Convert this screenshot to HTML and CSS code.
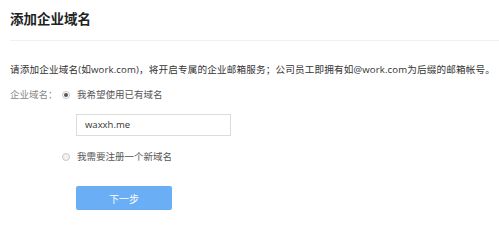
FILE: index.html
```html
<!DOCTYPE html>
<html lang="zh-CN">
<head>
<meta charset="utf-8">
<title>添加企业域名</title>
<link rel="stylesheet" href="styles.css">
</head>
<body>
<div class="page">
  <div class="header">
    <h1 class="title">添加企业域名</h1>
  </div>
  <p class="desc">请添加企业域名(如work.com)，将开启专属的企业邮箱服务；公司员工即拥有如@work.com为后缀的邮箱帐号。</p>
  <div class="form">
    <div class="label">企业域名：</div>
    <div class="field">
      <label class="option"><span class="radio checked"></span><span>我希望使用已有域名</span></label>
      <div class="input">waxxh.me</div>
      <label class="option option-2"><span class="radio"></span><span>我需要注册一个新域名</span></label>
      <button class="btn">下一步</button>
    </div>
  </div>
</div>
</body>
</html>
```
FILE: styles.css
```css
html, body {
  margin: 0;
  padding: 0;
  background: #fff;
}
body {
  font-family: "Open Sans", "Noto Sans CJK SC", sans-serif;
  color: #333;
}
.page {
  padding: 10px 0 0 10px;
}
.header {
  height: 30px;
  border-bottom: 1px solid #f0f0f0;
}
.title {
  margin: 0;
  font-size: 13.5px;
  line-height: 18px;
  font-weight: bold;
  color: #222;
}
.desc {
  margin: 22px 0 0 0;
  font-size: 9.6px;
  line-height: 14px;
  letter-spacing: 0.15px;
  color: #333;
  white-space: nowrap;
}
.form {
  margin-top: 11px;
  display: grid;
  grid-template-columns: 52px 1fr;
  font-size: 9.5px;
  line-height: 14px;
}
.label {
  color: #888;
}
.field {
  display: flex;
  flex-direction: column;
  align-items: flex-start;
}
.option {
  display: flex;
  align-items: center;
  gap: 7px;
  color: #555;
}
.option-2 {
  margin-top: 14px;
}
.radio {
  width: 6px;
  height: 6px;
  border: 1px solid #c8c8c8;
  border-radius: 50%;
  background: #f2f2f2;
  position: relative;
}
.radio.checked {
  background: #fff;
}
.radio.checked::after {
  content: "";
  position: absolute;
  left: 1px;
  top: 1px;
  width: 4px;
  height: 4px;
  border-radius: 50%;
  background: #555;
}
.input {
  margin: 12px 0 0 14px;
  box-sizing: border-box;
  width: 155px;
  height: 22px;
  border: 1px solid #dcdcdc;
  padding: 0 8px;
  line-height: 20px;
  color: #333;
}
.btn {
  margin: 22px 0 0 14px;
  width: 96px;
  height: 24px;
  border: 0;
  border-radius: 2px;
  background: #6aaef5;
  color: #fff;
  font-family: inherit;
  font-size: 10px;
  padding: 0;
}
```
